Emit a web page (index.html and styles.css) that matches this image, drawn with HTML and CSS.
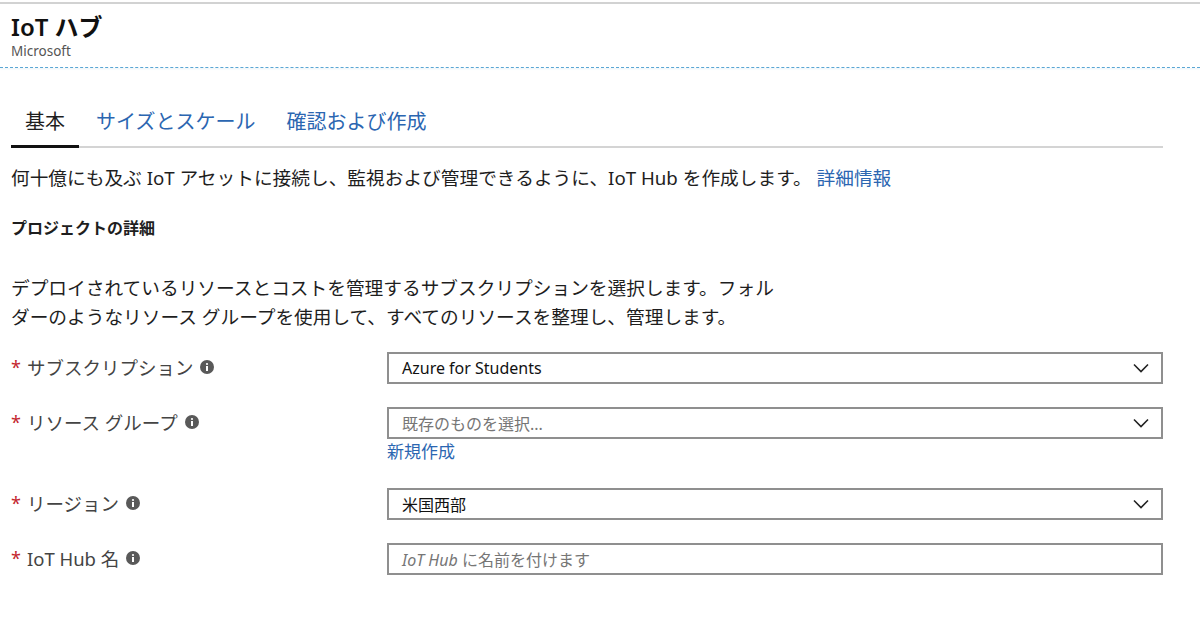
FILE: index.html
```html
<!DOCTYPE html>
<html lang="ja">
<head>
    <meta charset="UTF-8">
    <meta name="viewport" content="width=device-width, initial-scale=1.0">
    <title>IoT ハブ</title>
    <link rel="stylesheet" href="styles.css">
</head>
<body>
    <div class="topline"></div>
    <header class="blade-header">
        <h1 class="blade-title">IoT ハブ</h1>
        <div class="blade-subtitle">Microsoft</div>
    </header>

    <main class="content">
        <nav class="tabs">
            <a class="tab active" href="#">基本</a>
            <a class="tab" href="#">サイズとスケール</a>
            <a class="tab" href="#">確認および作成</a>
        </nav>

        <p class="intro">何十億にも及ぶ IoT アセットに接続し、監視および管理できるように、IoT Hub を作成します。 <a class="link" href="#">詳細情報</a></p>

        <h2 class="section-title">プロジェクトの詳細</h2>

        <p class="section-desc">デプロイされているリソースとコストを管理するサブスクリプションを選択します。フォルダーのようなリソース グループを使用して、すべてのリソースを整理し、管理します。</p>

        <div class="form">
            <div class="form-row">
                <label class="field-label"><span class="req">*</span> サブスクリプション
                    <svg class="info" width="14" height="14" viewBox="0 0 14 14"><circle cx="7" cy="7" r="7" fill="#595959"/><rect x="6" y="6" width="2" height="5" fill="#fff"/><circle cx="7" cy="4" r="1.1" fill="#fff"/></svg>
                </label>
                <div class="field">
                    <div class="select">
                        <span>Azure for Students</span>
                        <svg class="chevron" width="16" height="10" viewBox="0 0 16 10"><path d="M1 1.5 L8 8.5 L15 1.5" fill="none" stroke="#222" stroke-width="1.6"/></svg>
                    </div>
                </div>
            </div>

            <div class="form-row">
                <label class="field-label"><span class="req">*</span> リソース グループ
                    <svg class="info" width="14" height="14" viewBox="0 0 14 14"><circle cx="7" cy="7" r="7" fill="#595959"/><rect x="6" y="6" width="2" height="5" fill="#fff"/><circle cx="7" cy="4" r="1.1" fill="#fff"/></svg>
                </label>
                <div class="field">
                    <div class="select">
                        <span class="placeholder">既存のものを選択...</span>
                        <svg class="chevron" width="16" height="10" viewBox="0 0 16 10"><path d="M1 1.5 L8 8.5 L15 1.5" fill="none" stroke="#222" stroke-width="1.6"/></svg>
                    </div>
                    <a class="link new-link" href="#">新規作成</a>
                </div>
            </div>

            <div class="form-row">
                <label class="field-label"><span class="req">*</span> リージョン
                    <svg class="info" width="14" height="14" viewBox="0 0 14 14"><circle cx="7" cy="7" r="7" fill="#595959"/><rect x="6" y="6" width="2" height="5" fill="#fff"/><circle cx="7" cy="4" r="1.1" fill="#fff"/></svg>
                </label>
                <div class="field">
                    <div class="select">
                        <span>米国西部</span>
                        <svg class="chevron" width="16" height="10" viewBox="0 0 16 10"><path d="M1 1.5 L8 8.5 L15 1.5" fill="none" stroke="#222" stroke-width="1.6"/></svg>
                    </div>
                </div>
            </div>

            <div class="form-row">
                <label class="field-label"><span class="req">*</span> IoT Hub 名
                    <svg class="info" width="14" height="14" viewBox="0 0 14 14"><circle cx="7" cy="7" r="7" fill="#595959"/><rect x="6" y="6" width="2" height="5" fill="#fff"/><circle cx="7" cy="4" r="1.1" fill="#fff"/></svg>
                </label>
                <div class="field">
                    <div class="textbox">
                        <span class="placeholder"><i>IoT Hub</i> に名前を付けます</span>
                    </div>
                </div>
            </div>
        </div>
    </main>
</body>
</html>
```

FILE: styles.css
```css
body {
    margin: 0;
    font-family: "Noto Sans", "Noto Sans CJK JP", sans-serif;
    color: #1e1e1e;
    background: #fff;
}

.topline {
    height: 2px;
    margin-top: 2px;
    background-color: #d2d2d2;
}

.blade-header {
    padding: 8px 11px 7px;
    border-bottom: 1px dashed #5aa6d4;
    box-shadow: 0 1px 2px rgba(120, 180, 210, 0.15);
}

.blade-title {
    margin: 0;
    font-size: 24px;
    line-height: 30px;
    font-weight: 600;
    color: #111;
}

.blade-subtitle {
    font-size: 13.5px;
    line-height: 18px;
    color: #555;
}

.content {
    width: 1152px;
    padding: 39px 0 0 11px;
}

.tabs {
    display: flex;
    gap: 3px;
    border-bottom: 2px solid #d4d4d4;
}

.tab {
    padding: 0 14px 8px;
    font-size: 20px;
    line-height: 30px;
    color: #2b66b1;
    text-decoration: none;
    margin-bottom: -2px;
    border-bottom: 3px solid transparent;
}

.tab.active {
    color: #1e1e1e;
    border-bottom: 3px solid #111;
    padding-bottom: 7px;
}

.intro {
    margin: 15px 0 0;
    font-size: 18.7px;
    line-height: 30px;
}

.link {
    color: #2b66b1;
    text-decoration: none;
}

.section-title {
    margin: 24px 0 0;
    font-size: 16px;
    line-height: 22px;
    font-weight: bold;
}

.section-desc {
    max-width: 770px;
    margin: 34px 0 0;
    font-size: 18.7px;
    line-height: 29px;
}

.form {
    display: flex;
    flex-direction: column;
    gap: 23px;
    margin-top: 21px;
}

.form-row {
    display: flex;
}

.field-label {
    display: flex;
    align-items: center;
    gap: 6px;
    width: 376px;
    height: 30px;
    font-size: 18.5px;
    color: #444;
}

.req {
    color: #c4262e;
    font-size: 18px;
}

.info {
    margin-left: 1px;
}

.field {
    flex: 1;
}

.select, .textbox {
    display: flex;
    align-items: center;
    justify-content: space-between;
    height: 32px;
    box-sizing: border-box;
    padding: 0 12px 0 13px;
    border: 2px solid #8f8f8f;
    font-size: 16px;
    color: #111;
}

.placeholder {
    color: #767676;
}

.new-link {
    display: block;
    font-size: 17px;
    line-height: 26px;
}
```
